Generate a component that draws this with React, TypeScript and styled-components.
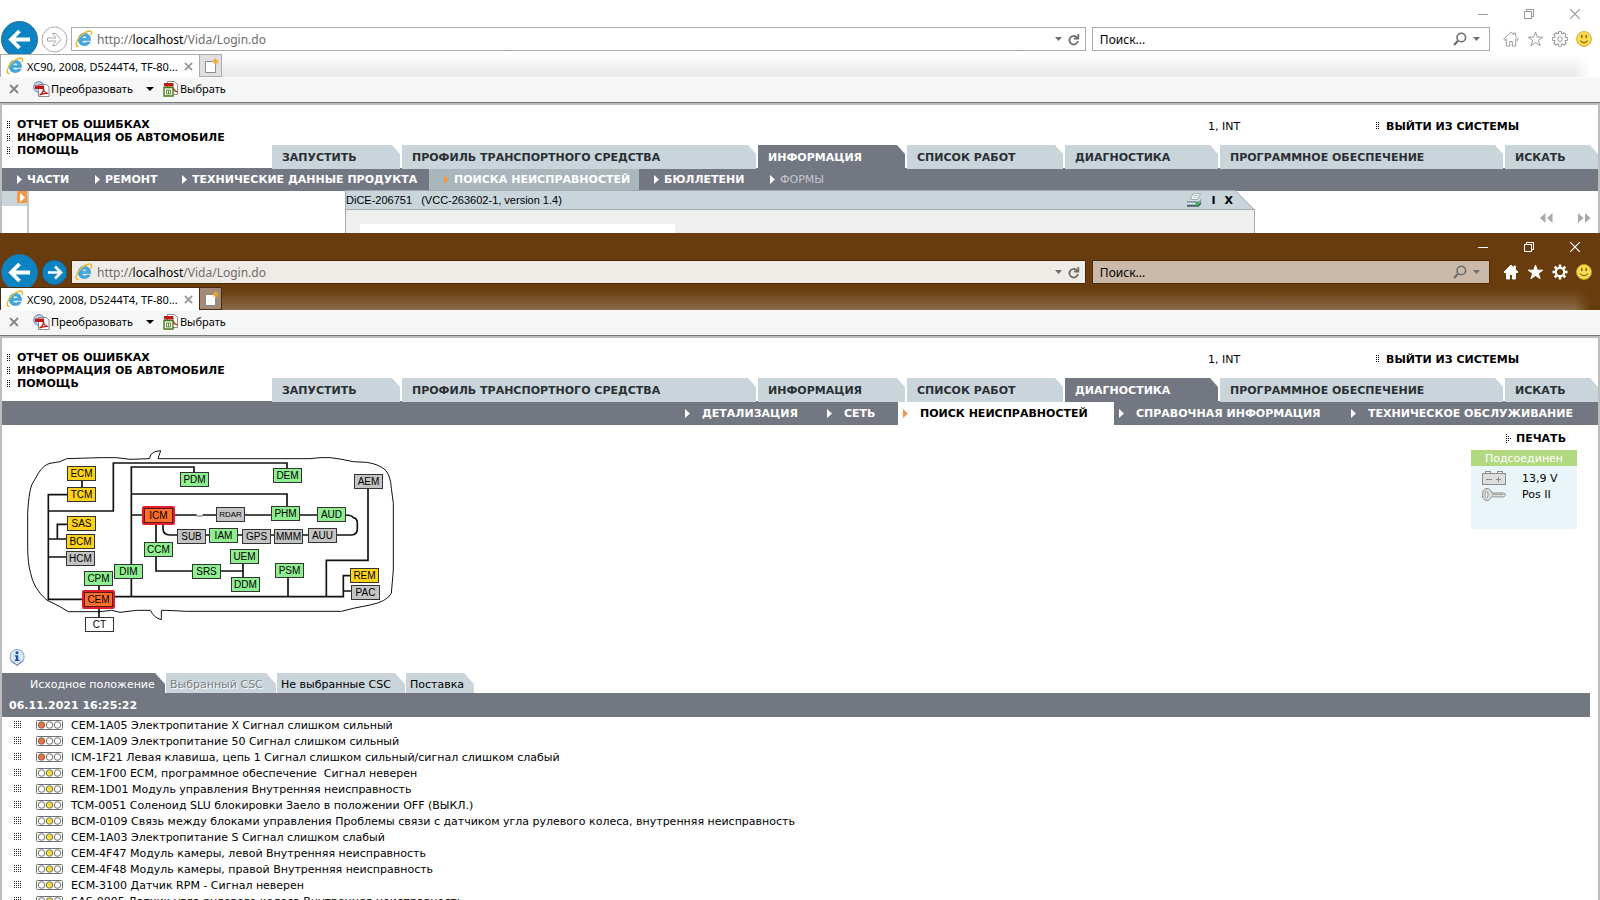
import React from "react";
import styled, { createGlobalStyle, css } from "styled-components";

const UI = `"Noto Sans", "Open Sans", sans-serif`;
const PAGE = `"DejaVu Sans", sans-serif`;

const SLATE = "#737781";
const PALE = "#c9d5db";

const Global = createGlobalStyle`
  * { box-sizing: border-box; }
  html, body { margin: 0; background: #fff; }
  body { font-family: ${PAGE}; font-size: 11px; color: #000; overflow: hidden; }
  button { border: 0; padding: 0; margin: 0; background: none; color: inherit; font: inherit; cursor: pointer; }
  a { color: inherit; text-decoration: none; }
  svg { display: block; flex: none; }
  ul { list-style: none; margin: 0; padding: 0; }
`;

const Desktop = styled.div`
  display: flex;
  flex-direction: column;
  height: 100vh;
`;

const BrowserWindow = styled.section<{ $front?: boolean }>`
  display: flex;
  flex-direction: column;
  overflow: hidden;
  min-height: 0;
  ${(p) => (p.$front ? css`flex: 1 1 0;` : css`flex: 0 0 233px;`)}
`;

/* ---------- browser chrome ---------- */

const Chrome = styled.header<{ $dark: boolean }>`
  flex: none;
  background: ${(p) => (p.$dark ? "#693c0d" : "#fff")};
  color: ${(p) => (p.$dark ? "#fff" : "#999")};
  font-family: ${UI};
`;

const Caption = styled.div`
  display: flex;
  justify-content: flex-end;
  height: 27px;
  padding-right: 2px;
`;

const CaptionButton = styled.button`
  display: flex;
  align-items: center;
  justify-content: center;
  width: 46px;
  height: 27px;
`;

const NavRow = styled.div`
  display: flex;
  align-items: center;
  height: 24px;
  padding-left: 1px;
  margin-bottom: 3px;
`;

const RoundButton = styled.button`
  flex: none;
  margin-right: 3px;
`;

const barBox = css<{ $dark: boolean }>`
  display: flex;
  align-items: center;
  height: 24px;
  min-width: 0;
  border: 1px solid ${(p) => (p.$dark ? "#4a2a09" : "#ababab")};
  color: #6d6d6d;
`;

const AddressBar = styled.div<{ $dark: boolean }>`
  ${barBox}
  flex: 1015 1 0;
  padding: 0 5px 0 3px;
  margin-right: 6px;
  background: ${(p) => (p.$dark ? "#efece7" : "#fff")};
`;

const AddressText = styled.div`
  flex: 1;
  margin-left: 4px;
  padding-top: 1px;
  font-size: 12px;
  line-height: 20px;
  white-space: nowrap;
  outline: none;
  b { font-weight: 400; color: #000; }
`;

const SearchBar = styled.form<{ $dark: boolean }>`
  ${barBox}
  flex: 384 1 0;
  padding: 0 9px 0 7px;
  background: ${(p) => (p.$dark ? "#cbb9a9" : "#fff")};
`;

const SearchInput = styled.input`
  flex: 1;
  min-width: 0;
  border: 0;
  padding: 1px 0 0;
  background: none;
  outline: none;
  font-family: ${UI};
  font-size: 12px;
  line-height: 20px;
  &::placeholder { color: #000; opacity: 1; }
`;

const BarIcon = styled.button`
  margin-left: 6px;
`;

const Tools = styled.div`
  display: flex;
  gap: 8px;
  width: 110px;
  padding-left: 13px;
`;

const TabStrip = styled.div<{ $dark: boolean }>`
  position: relative;
  display: flex;
  height: 23px;
  background:
    linear-gradient(to right, transparent calc(100% - 26px), ${(p) => (p.$dark ? "#693c0d" : "#fff")} calc(100% - 10px)),
    ${(p) => (p.$dark ? "linear-gradient(#693c0d, #693c0d 10%, #8a6b49)" : "linear-gradient(#fff, #ebebeb 80%)")};
`;

const BrowserTab = styled.div<{ $dark: boolean }>`
  display: flex;
  align-items: center;
  width: 200px;
  padding-left: 5px;
  background: #fff;
  border: 1px solid ${(p) => (p.$dark ? "#4a2a09" : "#ababab")};
  border-bottom: 0;
  color: #000;
  font-size: 11px;
  line-height: 20px;
  white-space: nowrap;
`;

const TabTitle = styled.span`
  flex: 1;
  margin-left: 3px;
  padding-top: 1px;
`;

const TabClose = styled.button`
  margin-right: 6px;
`;

const NewTab = styled.button<{ $dark: boolean }>`
  display: flex;
  align-items: center;
  justify-content: center;
  width: 22px;
  background: ${(p) => (p.$dark ? "#a38a75" : "#e0e0e0")};
  border: 1px solid ${(p) => (p.$dark ? "#4a2a09" : "#ababab")};
  border-left: 0;
`;

const CommandBar = styled.div`
  display: flex;
  align-items: center;
  height: 26px;
  padding: 0 0 2px 9px;
  background: #f6f6f6;
  border-top: 1px solid #fbfbfb;
  border-bottom: 1px solid #777;
  color: #000;
  font-size: 11px;
  line-height: 20px;
`;

const Command = styled.button<{ $gap: number }>`
  display: flex;
  align-items: center;
  gap: 1px;
  margin-left: ${(p) => p.$gap}px;
`;

const IeLogo = () => (
  <svg width="18" height="18" viewBox="0 0 18 18" fill="none">
    <path
      d="M9.400 3.200c-3.600 0-6.200 2.600-6.200 6.200s2.600 6.200 6.300 6.200c2.600 0 4.700-1.300 5.700-3.600h-3.500c-.5.600-1.200.9-2.100.9-1.500 0-2.500-.9-2.600-2.400h8.600c.3-4.300-2.300-7.300-6.200-7.300zM7 8.200c.2-1.300 1.200-2.100 2.500-2.100s2.200.8 2.400 2.100z"
      fill="#3fa7e1"
      stroke="#2a8ac8"
      strokeWidth=".5"
    />
    <path d="M3.800 16.400C-.6 17.200.8 10.600 5.200 6.200 9.200 2.200 14.800-.2 16.200 1.700c.7 1 .3 2.400-.4 3.700" stroke="#ecb930" strokeWidth="1.500" />
  </svg>
);

const BackIcon = () => (
  <svg width="37" height="37" viewBox="0 0 37 37" fill="none">
    <circle cx="18.500" cy="18.500" r="18" fill="#0c84c4" stroke="#2c6f93" />
    <path d="M10 18.500h19M18.500 10l-8.500 8.500 8.500 8.500" stroke="#fff" strokeWidth="3.800" />
  </svg>
);

const ForwardIcon = ({ dark }: { dark: boolean }) => (
  <svg width="27" height="27" viewBox="0 0 27 27" fill="none">
    <circle cx="13.500" cy="13.500" r="12.500" fill={dark ? "#0c84c4" : "#fff"} stroke={dark ? "#31485a" : "#ababab"} />
    {dark ? (
      <path d="M7 13.500h13M14 7.500l6 6-6 6" stroke="#fff" strokeWidth="2.600" />
    ) : (
      <path d="M6.500 12h8.500l-3.500-4.500h3l5.500 6-5.500 6h-3l3.500-4.500H6.500z" stroke="#ababab" />
    )}
  </svg>
);

const CaretIcon = ({ color = "#6d6d6d", size = 7 }: { color?: string; size?: number }) => (
  <svg width={size} height="4" viewBox="0 0 7 4" preserveAspectRatio="none"><path d="M0 0h7L3.500 4z" fill={color} /></svg>
);

const RefreshIcon = () => (
  <svg width="12" height="13" viewBox="0 0 12 13" fill="none" stroke="#6d6d6d" strokeWidth="1.800">
    <path d="M9.600 5.200A4.300 4.300 0 1 0 10 8" />
    <path d="M10.300 1v4.500H6" />
  </svg>
);

const MagnifierIcon = () => (
  <svg width="14" height="14" viewBox="0 0 14 14" fill="none" stroke="#6d6d6d">
    <circle cx="8.300" cy="5.500" r="4.300" strokeWidth="1.600" />
    <path d="M5 8.800L1 13" strokeWidth="2.200" />
  </svg>
);

const HomeIcon = ({ dark }: { dark: boolean }) => (
  <svg width="16" height="16" viewBox="0 0 16 16" fill={dark ? "#fff" : "none"} stroke={dark ? "#fff" : "#999"}>
    {dark ? (
      <path d="M8 1L1 8l1 1 1.500-1.200V15h3v-4.500h3V15h3V7.800L14 9l1-1-2.500-2.500V2H11v2z" />
    ) : (
      <path d="M8 .9L.7 8.200l1.300 1.200 1.300-1.200V15h3.400v-4.500h2.600V15h3.400V8.200L14 9.400l1.300-1.200-2.600-2.700V2h-2v1.600z" />
    )}
  </svg>
);

const StarIcon = ({ dark }: { dark: boolean }) => (
  <svg width="17" height="16" viewBox="0 0 17 16" fill={dark ? "#fff" : "none"} stroke={dark ? "#fff" : "#999"}>
    <path d="M8.500 1l1.800 5.200h5.400l-4.300 3.200 1.700 5.300-4.600-3.200-4.600 3.200 1.700-5.300L1.300 6.200h5.400z" />
  </svg>
);

const GearIcon = ({ dark }: { dark: boolean }) => {
  const teeth = Array.from({ length: 8 }, (_, i) => i * 45);
  return (
    <svg width="16" height="16" viewBox="0 0 16 16" fill="none">
      {dark ? (
        <g stroke="#fff">
          <circle cx="8" cy="8" r="4.200" strokeWidth="2.200" />
          {teeth.map((a) => <path key={a} d="M8 .5V3.500" strokeWidth="2.600" transform={`rotate(${a} 8 8)`} />)}
        </g>
      ) : (
        <g>
          <g stroke="#999">
            <circle cx="8" cy="8" r="5.600" />
            {teeth.map((a) => <path key={a} d="M6.500 3V.6h3V3" fill="#fff" transform={`rotate(${a} 8 8)`} />)}
          </g>
          <circle cx="8" cy="8" r="5" fill="#fff" />
          <circle cx="8" cy="8" r="2.300" stroke="#999" />
        </g>
      )}
    </svg>
  );
};

const SmileIcon = () => (
  <svg width="16" height="16" viewBox="0 0 16 16" fill="none">
    <circle cx="8" cy="8" r="7.500" fill="#fcd84a" stroke="#c9a63a" strokeWidth=".8" />
    <path d="M5.800 4v3M10.200 4v3" stroke="#6b5410" strokeWidth="1.300" />
    <path d="M4 9.500q4 4.500 8 0" stroke="#6b5410" />
  </svg>
);

const CrossIcon = ({ size, color, weight }: { size: number; color: string; weight: number }) => (
  <svg width={size} height={size} viewBox="0 0 10 10" stroke={color} strokeWidth={weight}>
    <path d="M1 1l8 8M9 1L1 9" />
  </svg>
);

const NewTabIcon = () => (
  <svg width="16" height="16" viewBox="0 0 16 16">
    <path d="M2.500 3.500h10v11h-10z" fill="#fff" stroke="#8b8b8b" />
    <circle cx="12.500" cy="3.500" r="2" fill="#f3a52e" />
    <path d="M12.500 0v7M9 3.500h7M10 1l5 5M15 1l-5 5" stroke="#f3a52e" strokeWidth=".8" />
  </svg>
);

const PdfIcon = () => (
  <svg width="17" height="16" viewBox="0 0 17 16" fill="none">
    <circle cx="6" cy="6" r="5.300" fill="#c3d4ea" stroke="#5a7fb5" />
    <path d="M5.500 3.500h8l2.500 2.500v9.500H5.500z" fill="#fff" stroke="#8a8a8a" />
    <path d="M2 4.500h9V8H2z" fill="#c01818" />
    <path d="M6.500 14c3-1.500 4-4.500 3.800-6.500.5 3 2 4.500 5 5-3-.4-6 .2-8.800 1.500z" stroke="#c01818" strokeWidth="1.200" />
  </svg>
);

const SelectIcon = () => (
  <svg width="16" height="16" viewBox="0 0 16 16" fill="none">
    <path d="M4.500.5h7l3 3v10h-10z" fill="#fff" stroke="#8a8a8a" />
    <path d="M1 2h9.500v3.500H1z" fill="#c01818" />
    <path d="M10 6.500c.8 2.500 2 4 4.500 4.500" stroke="#c01818" strokeWidth="1.200" />
    <path d="M1 6.500h9v8.500H1z" fill="#f3f7ea" stroke="#4a7a1c" strokeWidth="1.400" />
    <path d="M3.500 9h4v4h-4zM5.500 9v4" stroke="#4a7a1c" strokeWidth=".8" />
  </svg>
);

const BrowserChrome = ({ dark = false }: { dark?: boolean }) => (
  <Chrome $dark={dark}>
    <Caption>
      <CaptionButton aria-label="Свернуть">
        <svg width="10" height="10" viewBox="0 0 10 10" stroke="currentColor" shapeRendering="crispEdges"><path d="M0 5.500h10" /></svg>
      </CaptionButton>
      <CaptionButton aria-label="Восстановить">
        <svg width="10" height="10" viewBox="0 0 10 10" fill="none" stroke="currentColor" shapeRendering="crispEdges">
          <path d="M.5 2.500h7v7h-7zM2.500 2.500v-2h7v7h-2" />
        </svg>
      </CaptionButton>
      <CaptionButton aria-label="Закрыть"><CrossIcon size={12} color="currentColor" weight={1} /></CaptionButton>
    </Caption>
    <NavRow>
      <RoundButton aria-label="Назад"><BackIcon /></RoundButton>
      <RoundButton aria-label="Вперед"><ForwardIcon dark={dark} /></RoundButton>
      <AddressBar $dark={dark}>
        <IeLogo />
        <AddressText role="textbox" aria-label="Адрес" contentEditable suppressContentEditableWarning spellCheck={false}>
          http://<b>localhost</b>/Vida/Login.do
        </AddressText>
        <BarIcon aria-label="Журнал"><CaretIcon /></BarIcon>
        <BarIcon aria-label="Обновить"><RefreshIcon /></BarIcon>
      </AddressBar>
      <SearchBar $dark={dark} role="search">
        <SearchInput aria-label="Поиск" placeholder="Поиск..." />
        <BarIcon type="button" aria-label="Найти"><MagnifierIcon /></BarIcon>
        <BarIcon type="button" aria-label="Службы поиска"><CaretIcon /></BarIcon>
      </SearchBar>
      <Tools>
        <button aria-label="Домашняя страница"><HomeIcon dark={dark} /></button>
        <button aria-label="Избранное"><StarIcon dark={dark} /></button>
        <button aria-label="Сервис"><GearIcon dark={dark} /></button>
        <button aria-label="Отзыв"><SmileIcon /></button>
      </Tools>
    </NavRow>
    <TabStrip $dark={dark}>
      <BrowserTab $dark={dark}>
        <IeLogo />
        <TabTitle>XC90, 2008, D5244T4, TF-80...</TabTitle>
        <TabClose aria-label="Закрыть вкладку"><CrossIcon size={9} color="#999" weight={2} /></TabClose>
      </BrowserTab>
      <NewTab $dark={dark} aria-label="Новая вкладка"><NewTabIcon /></NewTab>
    </TabStrip>
    <CommandBar>
      <button aria-label="Закрыть панель"><CrossIcon size={10} color="#888" weight={2} /></button>
      <Command $gap={14}><PdfIcon />Преобразовать</Command>
      <Command $gap={13} aria-label="Параметры"><CaretIcon color="#000" size={8} /></Command>
      <Command $gap={9}><SelectIcon />Выбрать</Command>
    </CommandBar>
  </Chrome>
);

/* ---------- site header ---------- */

const Page = styled.main`
  display: flex;
  flex-direction: column;
  flex: 1 1 0;
  min-height: 0;
  overflow: hidden;
  background: #fff;
  border: 2px solid #bdbdbd;
  border-bottom: 0;
`;

const SiteHeader = styled.div`
  display: flex;
  flex: none;
  height: 63px;
`;

const QuickLinks = styled.ul`
  width: 270px;
  padding: 13px 0 0 5px;
  font-weight: 700;
  line-height: 13px;
`;

const BulletLink = styled.a`
  display: flex;
  align-items: center;
  gap: 7px;
  font-weight: 700;
  white-space: nowrap;
`;

const HeaderMain = styled.div`
  flex: 1;
`;

const SessionRow = styled.div`
  display: flex;
  justify-content: flex-end;
  align-items: center;
  height: 40px;
  padding-top: 2px;
`;

const UserName = styled.span`
  width: 168px;
`;

const Logout = styled.div`
  width: 222px;
`;

const MainTabs = styled.nav`
  display: grid;
  grid-template-columns: 128fr 354fr 147fr 156fr 153fr 283fr 93fr;
  gap: 2px;
  height: 23px;
`;

const MainTab = styled.a<{ $active: boolean }>`
  padding: 1px 0 0 10px;
  background: ${(p) => (p.$active ? SLATE : PALE)};
  color: ${(p) => (p.$active ? "#fff" : "#2b2f33")};
  clip-path: polygon(0 0, calc(100% - 8px) 0, 100% 9px, 100% 100%, 0 100%);
  font-weight: 700;
  line-height: 23px;
  white-space: nowrap;
`;

const SubNav = styled.nav<{ $end?: boolean }>`
  display: flex;
  flex: none;
  justify-content: ${(p) => (p.$end ? "flex-end" : "flex-start")};
  height: ${(p) => (p.$end ? 24 : 23)}px;
  padding-left: ${(p) => (p.$end ? 0 : 9)}px;
  background: ${SLATE};
`;

const SubItem = styled.a<{ $width: number; $gap: number; $pad: number; $tone?: "pale" | "white" | "muted" }>`
  display: flex;
  flex: none;
  align-items: center;
  gap: ${(p) => p.$gap}px;
  width: ${(p) => p.$width}px;
  padding-left: ${(p) => p.$pad}px;
  background: ${(p) => (p.$tone === "pale" ? "#a9b6bb" : p.$tone === "white" ? "#fff" : "transparent")};
  color: ${(p) => (p.$tone === "white" ? "#000" : p.$tone === "muted" ? "#c3c8d0" : "#fff")};
  font-weight: ${(p) => (p.$tone === "muted" ? 400 : 700)};
  white-space: nowrap;
`;

const Bullet = () => (
  <svg width="3" height="8" viewBox="0 0 3 8" shapeRendering="crispEdges">
    {[0, 2, 4, 6].map((y) => <path key={y} d={`M0 ${y}h1v1H0zM2 ${y}h1v1H2z`} />)}
  </svg>
);

const ArrowIcon = ({ color = "#fff" }: { color?: string }) => (
  <svg width="5" height="9" viewBox="0 0 5 9"><path d="M0 0l5 4.500L0 9z" fill={color} /></svg>
);

const QUICK = ["ОТЧЕТ ОБ ОШИБКАХ", "ИНФОРМАЦИЯ ОБ АВТОМОБИЛЕ", "ПОМОЩЬ"];
const TABS = ["ЗАПУСТИТЬ", "ПРОФИЛЬ ТРАНСПОРТНОГО СРЕДСТВА", "ИНФОРМАЦИЯ", "СПИСОК РАБОТ", "ДИАГНОСТИКА", "ПРОГРАММНОЕ ОБЕСПЕЧЕНИЕ", "ИСКАТЬ"];

const VidaHeader = ({ active }: { active: string }) => (
  <SiteHeader>
    <QuickLinks>
      {QUICK.map((q) => <li key={q}><BulletLink href="#"><Bullet />{q}</BulletLink></li>)}
    </QuickLinks>
    <HeaderMain>
      <SessionRow>
        <UserName>1, INT</UserName>
        <Logout><BulletLink href="#"><Bullet />ВЫЙТИ ИЗ СИСТЕМЫ</BulletLink></Logout>
      </SessionRow>
      <MainTabs>
        {TABS.map((t) => <MainTab key={t} href="#" $active={t === active}>{t}</MainTab>)}
      </MainTabs>
    </HeaderMain>
  </SiteHeader>
);

/* ---------- information page ---------- */

const InfoBody = styled.div`
  display: flex;
  flex: 1;
`;

const SideRail = styled.div`
  width: 27px;
  border-right: 2px solid #c4c9cc;
`;

const RailHead = styled.div`
  display: flex;
  justify-content: flex-end;
  height: 15px;
  background: ${PALE};
`;

const RailToggle = styled.button`
  display: flex;
  align-items: center;
  justify-content: center;
  width: 10px;
  height: 12px;
  background: #f09a48;
`;

const Spacer = styled.div`
  width: 316px;
`;

const DocPanel = styled.div`
  display: flex;
  flex-direction: column;
  flex: 1;
  margin-top: -1px;
`;

const DocHead = styled.div`
  display: flex;
  height: 20px;
`;

const DocTitle = styled.div`
  display: flex;
  flex: 1;
  align-items: center;
  padding-right: 2px;
  background: ${PALE};
  border: 1px solid #a4a9ac;
  border-right: 0;
  white-space: pre;
  font-family: "Liberation Sans", sans-serif;
  font-size: 11px;
`;

const DocName = styled.span`
  flex: 1;
`;

const DocAction = styled.button`
  margin-left: 9px;
  padding-top: 1px;
  font-family: ${PAGE};
  font-size: 11px;
  font-weight: 700;
`;

const DocContent = styled.div`
  flex: 1;
  padding: 14px 0 0 14px;
  background: #efefef;
  border: 1px solid #a4a9ac;
  border-width: 0 1px;
`;

const DocSheet = styled.div`
  width: 315px;
  height: 100%;
  background: #fff;
`;

const Pager = styled.div`
  display: flex;
  justify-content: flex-end;
  align-items: flex-start;
  gap: 25px;
  width: 343px;
  padding: 22px 7px 0 0;
`;

const PrinterIcon = () => (
  <svg width="16" height="15" viewBox="0 0 16 15">
    <path d="M1 8L4 5.500h11.500v4.500L12.500 14H1z" fill="#8fa3ae" />
    <path d="M1 8L4 5.500h11.500L13 8z" fill="#d5e0e6" />
    <path d="M4.500 6.500L7 .8h7.500L11.500 6.500z" fill="#fff" stroke="#7d8f99" strokeWidth=".7" />
    <path d="M7.500 2.500h5M6.700 4.300h5" stroke="#9fb0ba" strokeWidth=".8" />
    <path d="M1 10h11.500v1.200H1z" fill="#e9f0f3" />
    <path d="M1 12.800h11.500L15 10" stroke="#3f525d" fill="none" strokeWidth="1.200" />
    <path d="M9.500 9.300h3.500v3h-3.500z" fill="#2fc23a" />
  </svg>
);

const DoubleArrow = ({ flip }: { flip?: boolean }) => (
  <svg width="13" height="10" viewBox="0 0 13 10" fill="#a9a9a9">
    <path d={flip ? "M0 0l5.500 5L0 10zM7 0l5.500 5L7 10z" : "M5.500 0L0 5l5.500 5zM12.500 0L7 5l5.500 5z"} />
  </svg>
);

const InformationPage = () => (
  <Page>
    <VidaHeader active="ИНФОРМАЦИЯ" />
    <SubNav>
      <SubItem href="#" $width={78} $pad={6} $gap={5}><ArrowIcon />ЧАСТИ</SubItem>
      <SubItem href="#" $width={87} $pad={6} $gap={5}><ArrowIcon />РЕМОНТ</SubItem>
      <SubItem href="#" $width={253} $pad={6} $gap={5}><ArrowIcon />ТЕХНИЧЕСКИЕ ДАННЫЕ ПРОДУКТА</SubItem>
      <SubItem href="#" $width={210} $pad={15} $gap={5} $tone="pale"><ArrowIcon color="#f09a48" />ПОИСКА НЕИСПРАВНОСТЕЙ</SubItem>
      <SubItem href="#" $width={116} $pad={15} $gap={5}><ArrowIcon />БЮЛЛЕТЕНИ</SubItem>
      <SubItem href="#" $width={80} $pad={15} $gap={5} $tone="muted"><ArrowIcon />ФОРМЫ</SubItem>
    </SubNav>
    <InfoBody>
      <SideRail>
        <RailHead><RailToggle aria-label="Развернуть"><ArrowIcon /></RailToggle></RailHead>
      </SideRail>
      <Spacer />
      <DocPanel>
        <DocHead>
          <DocTitle>
            <DocName>{"DiCE-206751   (VCC-263602-1, version 1.4)"}</DocName>
            <DocAction aria-label="Печать"><PrinterIcon /></DocAction>
            <DocAction>I</DocAction>
            <DocAction>X</DocAction>
          </DocTitle>
          <svg width="20" height="20" viewBox="0 0 20 20">
            <path d="M0 0L20 20H0z" fill={PALE} />
            <path d="M0 .5L19.500 20M0 19.500h20" stroke="#a4a9ac" />
          </svg>
        </DocHead>
        <DocContent><DocSheet /></DocContent>
      </DocPanel>
      <Pager>
        <button aria-label="Предыдущая"><DoubleArrow /></button>
        <button aria-label="Следующая"><DoubleArrow flip /></button>
      </Pager>
    </InfoBody>
  </Page>
);

/* ---------- diagnostics page ---------- */

const Overview = styled.div`
  display: flex;
  flex: none;
  justify-content: space-between;
  height: 215px;
`;

const Diagram = styled.div`
  position: relative;
  width: 400px;
  height: 215px;
`;

const TONES = { y: "#ffd21a", g: "#8fee90", s: "#c4c4c4", w: "#fff", r: "#ff6f2a" };

const Node = styled.button<{ $x: number; $y: number; $tone: keyof typeof TONES; $small: boolean }>`
  position: absolute;
  left: ${(p) => p.$x}px;
  top: ${(p) => p.$y}px;
  width: ${(p) => (p.$tone === "r" ? 33 : 29)}px;
  height: ${(p) => (p.$tone === "r" ? 19 : 15)}px;
  background: ${(p) => TONES[p.$tone]};
  border: 1px solid #333;
  font-family: "Liberation Sans", sans-serif;
  font-size: ${(p) => (p.$small ? 8 : 10)}px;
  line-height: 13px;
  text-align: center;
  ${(p) => p.$tone === "r" && css`
    border: 2px solid #e01f2b;
    border-radius: 2px;
    box-shadow: inset 0 0 0 1px #5a1a10;
  `}
`;

type Module = [string, number, number, keyof typeof TONES];

const MODULES: Module[] = [
  ["ECM", 65, 41, "y"], ["TCM", 65, 62, "y"], ["SAS", 65, 91, "y"], ["BCM", 64, 109, "y"],
  ["HCM", 64, 126, "s"], ["DIM", 112, 139, "g"], ["CPM", 82, 146, "g"], ["CEM", 80, 165, "r"],
  ["CT", 83, 192, "w"], ["PDM", 178, 47, "g"], ["DEM", 271, 43, "g"], ["AEM", 352, 49, "s"],
  ["ICM", 140, 81, "r"], ["RDAR", 214, 82, "s"], ["PHM", 269, 81, "g"], ["AUD", 315, 82, "g"],
  ["SUB", 175, 104, "s"], ["IAM", 207, 103, "g"], ["GPS", 240, 104, "s"], ["MMM", 272, 104, "s"],
  ["AUU", 306, 103, "s"], ["CCM", 142, 117, "g"], ["UEM", 228, 124, "g"], ["SRS", 190, 139, "g"],
  ["DDM", 229, 152, "g"], ["PSM", 273, 138, "g"], ["REM", 348, 143, "y"], ["PAC", 349, 160, "s"],
];

const Wiring = () => (
  <svg width="400" height="215" viewBox="6 -15 1200 645" fill="none" stroke="#111">
    <path
      strokeWidth="3"
      d="M474 86H930L960 83H990L1020 87 1060 95 1100 97Q1140 103 1158 122 1172 140 1174 175L1180 220V420L1174 490Q1160 515 1110 525L1060 535 1025 544H560L500 541H484V569Q460 563 452 541H410L360 547 335 541 300 545H205L180 530 140 510Q100 475 92 430 83 400 83 350V250Q86 190 95 165L115 130Q130 105 150 100L180 95 200 86 300 83 350 83 390 88 448 86 453 73Q462 62 482 62z"
    />
    <path
      strokeWidth="5"
      d="M246 151V172M202 194H145V508H247M145 243H340V99H861V115M202 283H172V327M145 327H199M145 381H199M394 500V111H582V127M394 192H861V229M394 255H427M524 255H590M608 255H649M734 255H814M899 255H952M1037 255Q1055 255 1060 263 1072 265 1072 280V295Q1072 315 1055 315H1010M489 284V295Q489 315 509 315H532M617 315H628M712 315H727M811 315H823M907 315H925M468 284V337M468 379V423H577M658 423H729M729 400V442M341 500H1030V437H1051M1030 483H1054M864 439V500M1104 175V391H979V500M297 466V481M297 536V562"
    />
    <path strokeWidth="2" d="M590 258H608" />
  </svg>
);

const StatusColumn = styled.aside`
  width: 106px;
  margin-right: 21px;
`;

const PrintLink = styled.a`
  display: flex;
  align-items: center;
  gap: 5px;
  height: 25px;
  padding: 2px 0 0 35px;
  font-weight: 700;
`;

const StatusHead = styled.div`
  height: 16px;
  background: #b3d980;
  color: #fff;
  line-height: 17px;
  text-align: center;
`;

const StatusBody = styled.div`
  height: 63px;
  padding: 4px 0 0 11px;
  background: #eaf5fa;
`;

const StatusLine = styled.div`
  display: flex;
  align-items: center;
  gap: 16px;
  height: 16px;
`;

const BatteryIcon = () => (
  <svg width="24" height="14" viewBox="0 0 24 14" fill="none" stroke="#8c8c8c" shapeRendering="crispEdges">
    <path d="M.5 2.500h23v11H.5z" fill="#ddd" />
    <path d="M3.500 2.500v-2h5v2M15.500 2.500v-2h5v2M4 8.500h6M14 8.500h5M16.500 6v5" />
  </svg>
);

const KeyIcon = () => (
  <svg width="24" height="13" viewBox="0 0 24 13" fill="#ddd" stroke="#8c8c8c">
    <path d="M5 .5C2 .5.500 3 .5 6.500S2 12.500 5 12.500c2.300 0 3.800-1.600 4.300-3.500l1.200-1 1.500 1.500 1.500-1.500 1.500 1.500 1.500-1.500 1.500 1.500 1.500-1.500 1.500 1.500 1.500-1.500 1.300-1-1.800-2H9.500C9 2 7.500.5 5 .5z" />
    <ellipse cx="4.500" cy="6.500" rx="1.500" ry="3.500" fill="#fff" />
    <path d="M10 6.500h11" strokeWidth=".7" />
  </svg>
);

const PrintArrow = () => (
  <svg width="5" height="9" viewBox="0 0 5 9" shapeRendering="crispEdges">
    <path d="M0 0h1v1H0zM2 2h1v1H2zM0 4h1v1H0zM4 4h1v1H4zM2 6h1v1H2zM0 8h1v1H0zM0 2h1v1H0zM2 4h1v1H2zM0 6h1v1H0z" />
  </svg>
);

const InfoRow = styled.div`
  flex: none;
  height: 33px;
  padding: 9px 0 0 7px;
`;

const InfoIcon = () => (
  <svg width="16" height="17" viewBox="0 0 16 17">
    <path d="M8 .5a7.200 7.200 0 0 1 2.500 13.900L8 16.500l-2.500-2.200A7.200 7.200 0 0 1 8 .5z" fill="#dbe8f6" stroke="#8ba6c4" />
    <path d="M2 11.500q2 2.500 4 3L8 16.500l2.500-2.200q2-.5 3.500-2.800" stroke="#4f7098" fill="none" />
    <circle cx="8" cy="3.800" r="1.500" fill="#1f4f9e" />
    <path d="M5.800 6.200h3.400v4.600h1.300V12H5.800v-1.200h1.100V7.400H5.800z" fill="#1f4f9e" />
  </svg>
);

const CscTabs = styled.div`
  display: flex;
  flex: none;
  gap: 1px;
  height: 20px;
`;

const CscTab = styled.button<{ $width: number; $pad: number; $tone?: "active" | "disabled" }>`
  width: ${(p) => p.$width}px;
  padding: 3px 0 0 ${(p) => p.$pad}px;
  background: ${(p) => (p.$tone === "active" ? SLATE : PALE)};
  color: ${(p) => (p.$tone === "active" ? "#fff" : p.$tone === "disabled" ? "#7a7f82" : "#000")};
  text-shadow: ${(p) => (p.$tone === "disabled" ? "1px 1px 0 #fff" : "none")};
  clip-path: polygon(0 0, calc(100% - 10px) 0, 100% 11px, 100% 100%, 0 100%);
  line-height: 17px;
  text-align: left;
  white-space: nowrap;
`;

const DateBar = styled.h2`
  flex: none;
  height: 24px;
  margin: 0 8px 0 0;
  padding: 1px 0 0 7px;
  background: ${SLATE};
  color: #fff;
  font-size: 11px;
  font-weight: 700;
  line-height: 23px;
`;

const FaultRow = styled.li`
  display: flex;
  align-items: center;
  height: 16px;
  padding-left: 12px;
  white-space: pre;
`;

const FaultLink = styled.a`
  margin-left: 8px;
`;

const GridDots = () => (
  <svg width="22" height="8" viewBox="0 0 22 8" shapeRendering="crispEdges" fill="#222">
    {[0, 2, 4, 6].map((y) => <path key={y} d={`M0 ${y}h1v1H0zM2 ${y}h1v1H2zM4 ${y}h1v1H4zM6 ${y}h1v1H6z`} />)}
  </svg>
);

const Lights = ({ level }: { level: "red" | "yellow" }) => (
  <svg width="27" height="10" viewBox="0 0 27 10" fill="#fff" stroke="#707070">
    <rect x=".5" y=".5" width="26" height="9" rx="1" />
    <circle cx="5.500" cy="5" r="3.300" fill={level === "red" ? "#e8703a" : "#fff"} />
    <circle cx="13.500" cy="5" r="3.300" fill={level === "yellow" ? "#f3dc3c" : "#fff"} />
    <circle cx="21.500" cy="5" r="3.300" />
  </svg>
);

const FAULTS: ["red" | "yellow", string][] = [
  ["red", "CEM-1A05 Электропитание X Сигнал слишком сильный"],
  ["red", "CEM-1A09 Электропитание 50 Сигнал слишком сильный"],
  ["red", "ICM-1F21 Левая клавиша, цепь 1 Сигнал слишком сильный/сигнал слишком слабый"],
  ["yellow", "CEM-1F00 ECM, программное обеспечение  Сигнал неверен"],
  ["yellow", "REM-1D01 Модуль управления Внутренняя неисправность"],
  ["yellow", "TCM-0051 Соленоид SLU блокировки Заело в положении OFF (ВЫКЛ.)"],
  ["yellow", "BCM-0109 Связь между блоками управления Проблемы связи с датчиком угла рулевого колеса, внутренняя неисправность"],
  ["yellow", "CEM-1A03 Электропитание S Сигнал слишком слабый"],
  ["yellow", "CEM-4F47 Модуль камеры, левой Внутренняя неисправность"],
  ["yellow", "CEM-4F48 Модуль камеры, правой Внутренняя неисправность"],
  ["yellow", "ECM-3100 Датчик RPM - Сигнал неверен"],
  ["yellow", "SAS-0005 Датчик угла рулевого колеса Внутренняя неисправность"],
];

const DiagnosticsPage = () => (
  <Page>
    <VidaHeader active="ДИАГНОСТИКА" />
    <SubNav $end>
      <SubItem href="#" $width={142} $pad={0} $gap={12}><ArrowIcon />ДЕТАЛИЗАЦИЯ</SubItem>
      <SubItem href="#" $width={71} $pad={0} $gap={12}><ArrowIcon />СЕТЬ</SubItem>
      <SubItem href="#" $width={216} $pad={5} $gap={12} $tone="white"><ArrowIcon color="#f09a48" />ПОИСК НЕИСПРАВНОСТЕЙ</SubItem>
      <SubItem href="#" $width={232} $pad={5} $gap={12}><ArrowIcon />СПРАВОЧНАЯ ИНФОРМАЦИЯ</SubItem>
      <SubItem href="#" $width={252} $pad={5} $gap={12}><ArrowIcon />ТЕХНИЧЕСКОЕ ОБСЛУЖИВАНИЕ</SubItem>
    </SubNav>
    <Overview>
      <Diagram>
        <Wiring />
        {MODULES.map(([name, x, y, tone]) => (
          <Node key={name} $x={x} $y={y} $tone={tone} $small={name.length > 3}>{name}</Node>
        ))}
      </Diagram>
      <StatusColumn>
        <PrintLink href="#"><PrintArrow />ПЕЧАТЬ</PrintLink>
        <StatusHead>Подсоединен</StatusHead>
        <StatusBody>
          <StatusLine><BatteryIcon />13,9 V</StatusLine>
          <StatusLine><KeyIcon />Pos II</StatusLine>
        </StatusBody>
      </StatusColumn>
    </Overview>
    <InfoRow><button aria-label="Сведения"><InfoIcon /></button></InfoRow>
    <CscTabs>
      <CscTab $width={163} $pad={28} $tone="active">Исходное положение</CscTab>
      <CscTab $width={110} $pad={4} $tone="disabled">Выбранный CSC</CscTab>
      <CscTab $width={128} $pad={4}>Не выбранные CSC</CscTab>
      <CscTab $width={68} $pad={4}>Поставка</CscTab>
    </CscTabs>
    <DateBar>06.11.2021 16:25:22</DateBar>
    <ul>
      {FAULTS.map(([level, text]) => (
        <FaultRow key={text}>
          <GridDots />
          <Lights level={level} />
          <FaultLink href="#">{text}</FaultLink>
        </FaultRow>
      ))}
    </ul>
  </Page>
);

export default function App() {
  return (
    <>
      <Global />
      <Desktop>
        <BrowserWindow>
          <BrowserChrome />
          <InformationPage />
        </BrowserWindow>
        <BrowserWindow $front>
          <BrowserChrome dark />
          <DiagnosticsPage />
        </BrowserWindow>
      </Desktop>
    </>
  );
}
